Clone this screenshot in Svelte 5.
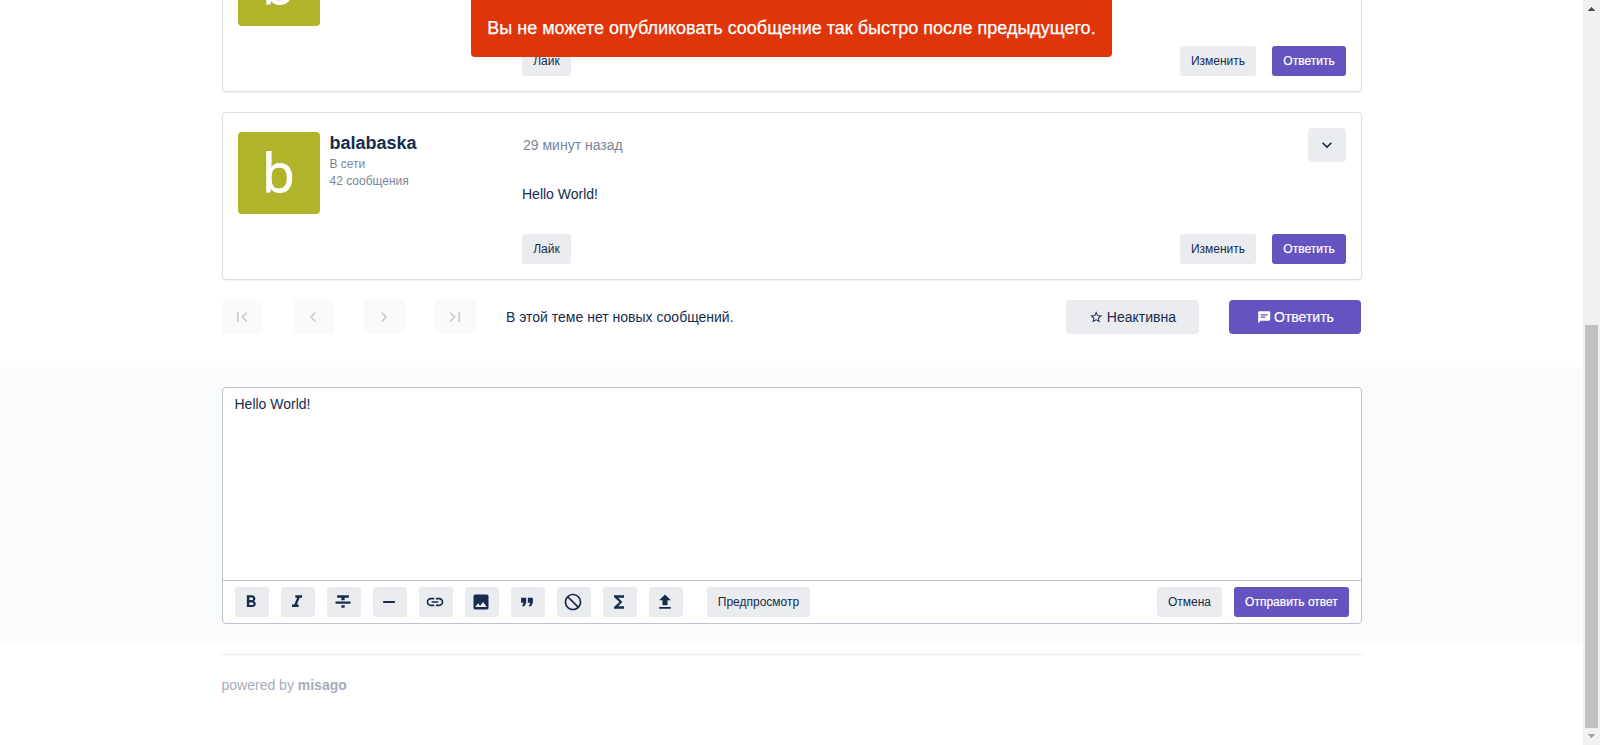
<script>
  const first = 'M18.41 16.59L13.82 12l4.59-4.59L17 6l-6 6 6 6zM6 6h2v12H6z';
  const prev = 'M15.41 7.41L14 6l-6 6 6 6 1.41-1.41L10.83 12z';
  const next = 'M10 6L8.59 7.41 13.17 12l-4.58 4.59L10 18l6-6z';
  const last = 'M5.59 7.41L10.18 12l-4.59 4.59L7 18l6-6-6-6zM16 6h2v12h-2z';
  const expand = 'M16.59 8.59L12 13.17 7.41 8.59 6 10l6 6 6-6z';
  const star = 'M22 9.24l-7.19-.62L12 2 9.19 8.63 2 9.24l5.46 4.73L5.82 21 12 17.27 18.18 21l-1.63-7.03L22 9.24zM12 15.4l-3.76 2.27 1-4.28-3.32-2.88 4.38-.38L12 6.1l1.71 4.04 4.38.38-3.32 2.88 1 4.28L12 15.4z';
  const chat = 'M20 2H4c-1.1 0-1.99.9-1.99 2L2 22l4-4h14c1.1 0 2-.9 2-2V4c0-1.1-.9-2-2-2zM6 7h12v2H6V7zm8 6H6v-2h8v2z';
  const pager = [first, prev, next, last];
  const tools = [
    'M15.6 10.79c.97-.67 1.65-1.77 1.65-2.79 0-2.26-1.75-4-4-4H7v14h7.04c2.09 0 3.71-1.7 3.71-3.79 0-1.52-.86-2.82-2.15-3.42zM10 6.5h3c.83 0 1.5.67 1.5 1.5s-.67 1.5-1.5 1.5h-3v-3zm3.5 9H10v-3h3.5c.83 0 1.5.67 1.5 1.5s-.67 1.5-1.5 1.5z',
    'M10 4v3h2.21l-3.42 8H6v3h8v-3h-2.21l3.42-8H18V4z',
    'M10 19h4v-3h-4v3zM5 4v3h5v3h4V7h5V4H5zM3 14h18v-2.5H3v2.500z',
    'M19 13.2H5v-2.400h14v2.400z',
    'M3.9 12c0-1.71 1.39-3.1 3.1-3.1h4V7H7c-2.76 0-5 2.24-5 5s2.24 5 5 5h4v-1.9H7c-1.71 0-3.1-1.39-3.1-3.1zM8 13h8v-2H8v2zm9-6h-4v1.9h4c1.71 0 3.1 1.39 3.1 3.1s-1.39 3.1-3.1 3.1h-4V17h4c2.76 0 5-2.24 5-5s-2.24-5-5-5z',
    'M21 19V5c0-1.1-.9-2-2-2H5c-1.1 0-2 .9-2 2v14c0 1.1.9 2 2 2h14c1.1 0 2-.9 2-2zM8.5 13.5l2.5 3.01L14.5 12l4.5 6H5l3.5-4.5z',
    'M6 17h3l2-4V7H5v6h3zm8 0h3l2-4V7h-6v6h3z',
    'M12 2C6.5 2 2 6.5 2 12s4.5 10 10 10 10-4.5 10-10S17.5 2 12 2zM4 12c0-4.4 3.6-8 8-8 1.8 0 3.5.6 4.9 1.7L5.7 16.9C4.6 15.5 4 13.8 4 12zm8 8c-1.8 0-3.5-.6-4.9-1.7L18.3 7.1C19.4 8.5 20 10.2 20 12c0 4.4-3.600 8-8 8z',
    'M18 4H6v2l6.500 6L6 18v2h12v-3h-7l5-5-5-5h7z',
    'M9 16h6v-6h4l-7-7-7 7h4zm-4 2h14v2H5z'
  ];
  const posts = [
    { id: 1, details: false },
    { id: 2, details: true }
  ];
  let draft = $state('Hello World!');
</script>

{#snippet icon(d, size = 20, flip = false)}
  <svg class:flip width={size} height={size} viewBox="0 0 24 24" aria-hidden="true"><path {d} /></svg>
{/snippet}

<div class="screen">
  <div class="page">
    <div class="toast"><span>Вы не можете опубликовать сообщение так быстро после предыдущего.</span></div>

    <main class="container posts">
      {#each posts as post (post.id)}
        <article class="post">
          <div class="avatar"><span>b</span></div>
          <div class="author">
            {#if post.details}
              <strong>balabaska</strong>
              <span>В сети</span>
              <span>42 сообщения</span>
            {/if}
          </div>
          <div class="body">
            {#if post.details}
              <header>
                <span class="date">29 минут назад</span>
                <button class="btn menu" aria-label="expand">{@render icon(expand)}</button>
              </header>
              <p>Hello World!</p>
            {/if}
            <footer>
              <button class="btn small label like">Лайк</button>
              <button class="btn small label edit">Изменить</button>
              <button class="btn small label primary reply">Ответить</button>
            </footer>
          </div>
        </article>
      {/each}
    </main>

    <nav class="container pager">
      {#each pager as d}
        <button class="btn page-btn" disabled aria-label="page">{@render icon(d)}</button>
      {/each}
      <span class="status">В этой теме нет новых сообщений.</span>
      <button class="btn watch">{@render icon(star, 14.4)}<span>Неактивна</span></button>
      <button class="btn primary answer">{@render icon(chat, 14.4)}<span>Ответить</span></button>
    </nav>

    <section class="posting">
      <div class="container editor">
        <textarea bind:value={draft} spellcheck="false"></textarea>
        <div class="toolbar">
          {#each tools as d, i}
            <button class="btn small tool" aria-label="format">{@render icon(d, 20, i === 7)}</button>
          {/each}
          <button class="btn small label preview">Предпросмотр</button>
          <button class="btn small label cancel">Отмена</button>
          <button class="btn small label primary send">Отправить ответ</button>
        </div>
      </div>
    </section>

    <footer class="container powered"><span>powered by <b>misago</b></span></footer>
  </div>

  <div class="scrollbar">
    <svg width="17" height="17" viewBox="0 0 17 17"><path fill="#505050" d="M5 11h7v-1h-1V9h-1V8H9V7H8v1H7v1H6v1H5z" /></svg>
    <div class="thumb"></div>
    <svg width="17" height="17" viewBox="0 0 17 17"><path fill="#a3a3a3" d="M5 6h7v1h-1v1h-1v1H9v1H8V9H7V8H6V7H5z" /></svg>
  </div>
</div>

<style>
  :global(body) { margin: 0; overflow: hidden; background: #fff; }
  .screen {
    display: flex;
    width: 1600px;
    height: 745px;
    overflow: hidden;
    color: #172b4d;
    font: 14px/20px "Liberation Sans", Arial, sans-serif;
  }
  .page { position: relative; width: 1583px; height: 745px; overflow: hidden; }
  .container { box-sizing: border-box; width: 1140px; margin-left: 221.5px; }
  svg { display: block; flex: none; fill: currentColor; }
  .flip { transform: scaleX(-1); }

  .toast {
    position: absolute;
    z-index: 2;
    top: -4px;
    left: 471px;
    box-sizing: border-box;
    width: 641px;
    height: 61px;
    padding-top: 2px;
    display: flex;
    align-items: center;
    justify-content: center;
    border-radius: 4px;
    background: #de350b;
    color: #fff;
    font-size: 18px;
    white-space: nowrap;
    -webkit-text-stroke: 0.25px #fff;
  }

  .posts { margin-top: -76px; display: flex; flex-direction: column; gap: 20px; }
  .post {
    box-sizing: border-box;
    height: 168px;
    display: flex;
    padding: 15px;
    border: 1px solid #dcdcdf;
    border-radius: 4px;
    background: #fff;
    box-shadow: 0 1px 1px rgba(0, 0, 0, 0.05);
  }
  .avatar {
    width: 82px;
    height: 82px;
    margin-top: 4px;
    flex: none;
    border-radius: 4px;
    background: #afb42b;
    color: #fff;
    text-align: center;
    font: 53px/80px "Open Sans", sans-serif;
    -webkit-text-stroke: 0.9px #fff;
  }
  .author {
    width: 202px;
    padding: 5px 0 0 10px;
    box-sizing: border-box;
    display: flex;
    flex-direction: column;
    color: #7a869a;
    font-size: 12px;
    line-height: 17px;
  }
  .author strong { color: #172b4d; font-size: 18px; line-height: 20px; margin-bottom: 3px; }
  .body { flex: 1; display: flex; flex-direction: column; }
  .body header { display: flex; justify-content: space-between; align-items: center; height: 34px; }
  .date { padding-left: 1.5px; color: #7a869a; }
  .body p { margin: 22px 0 0 0.5px; line-height: 20px; }
  .body footer { display: flex; margin-top: auto; }

  .btn {
    display: flex;
    align-items: center;
    justify-content: center;
    box-sizing: border-box;
    height: 34px;
    padding: 0;
    border: 0;
    border-radius: 4px;
    background: #ebecf0;
    color: #172b4d;
    font: inherit;
    white-space: nowrap;
  }
  .small { height: 30px; border-radius: 3px; font-size: 12px; }
  .label { padding-left: 1px; }
  .primary { background: #6554c0; color: #fff; -webkit-text-stroke: 0.2px #fff; }
  .menu { width: 38px; }
  .like { width: 49px; }
  .edit { width: 76px; margin-left: auto; }
  .reply { width: 74px; margin-left: 16px; }

  .pager { display: flex; align-items: center; margin-top: 20px; height: 34px; }
  .page-btn { width: 41px; margin-right: 30px; background: #fafafa; color: #c9cdd5; }
  .status { padding-left: 0.5px; }
  .watch, .answer { gap: 3px; padding-left: 1.5px; }
  .watch { width: 133px; margin-left: auto; }
  .answer { width: 132px; margin: 0 1px 0 30px; }

  .posting { box-sizing: border-box; height: 277px; margin-top: 33px; padding-top: 20px; background: #fafbfd; }
  .editor { height: 237px; border: 1px solid #bfc3d1; border-radius: 4px; background: #fff; overflow: hidden; }
  textarea {
    display: block;
    box-sizing: border-box;
    width: 100%;
    height: 192px;
    padding: 6px 12px;
    border: 0;
    outline: 0;
    resize: none;
    background: transparent;
    color: inherit;
    font: inherit;
  }
  .toolbar { display: flex; align-items: center; height: 42px; padding: 0 12px; border-top: 1px solid #bfc3d1; }
  .tool { width: 34px; margin-right: 12px; padding-right: 1px; }
  .preview { width: 103px; margin-left: 12px; }
  .cancel { width: 65px; margin-left: auto; }
  .send { width: 115px; margin-left: 12px; }

  .powered { margin-top: 10px; padding-top: 20px; border-top: 1px solid #ebecf0; color: #a5adba; }

  .scrollbar { display: flex; flex-direction: column; justify-content: space-between; width: 17px; height: 745px; background: #f1f1f1; }
  .thumb { width: 13px; height: 403px; margin: auto 2px 0; background: #c1c1c1; }
</style>
